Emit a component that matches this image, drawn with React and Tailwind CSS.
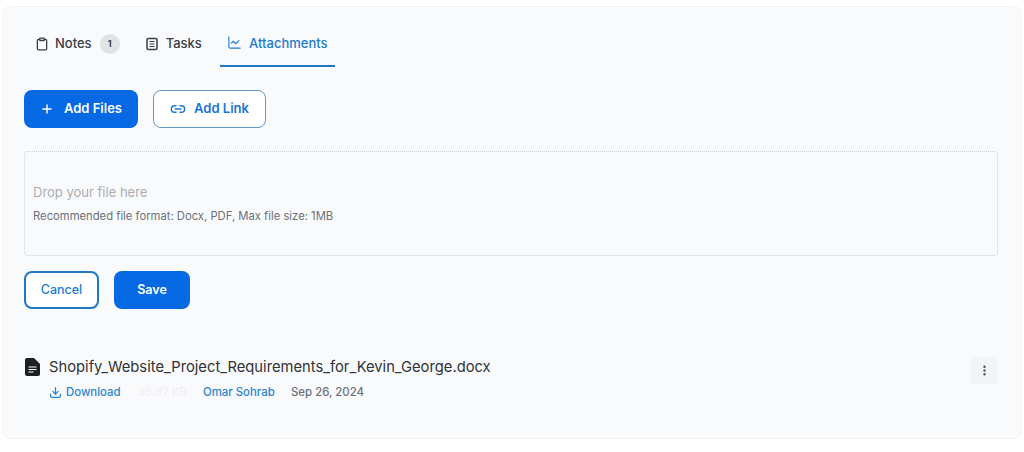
import { Plus, Link2, Download, EllipsisVertical, Clipboard, ChartLine } from 'lucide-react';

const App = () => {
  return (
    <div className="h-[452px] w-[1024px] overflow-hidden bg-white pt-[6px] pl-[2px] font-['Inter',sans-serif]">
      <div className="h-[433px] w-[1020px] rounded-lg border border-[#f2f4f6] bg-[#f9fafc] pl-[21px] pr-[23px]">
        {/* tabs */}
        <div className="flex h-[60px] items-end">
          <button className="flex h-[44px] items-center gap-[6px] pl-[11px] pr-[23px] pb-[2px] text-[13px] font-medium text-[#3a4048]">
            <Clipboard className="h-[14px] w-[14px]" strokeWidth={2.2} />
            <span>Notes</span>
            <span className="ml-[2px] flex h-[20px] w-[20px] items-center justify-center rounded-full bg-[#e1e2e4] text-[9px] font-bold">1</span>
          </button>
          <button className="flex h-[44px] items-center gap-[7px] pl-[2px] pr-[18px] pb-[2px] text-[13px] font-medium text-[#3a4048]">
            <svg viewBox="0 0 14 14" className="h-[14px] w-[14px]" fill="none" stroke="currentColor" strokeWidth="1.5">
              <rect x="2" y="1.5" width="10" height="11" rx="1.2" />
              <path d="M4.5 4.5h5M4.5 7h5M4.5 9.5h5" strokeWidth="1.2" />
            </svg>
            <span>Tasks</span>
          </button>
          <button className="flex h-[45px] w-[115px] items-center justify-center gap-[7px] border-b-2 border-[#1f78c4] text-[13px] font-medium text-[#1c7bd0]">
            <ChartLine className="h-[15px] w-[15px] -translate-y-[1px]" strokeWidth={1.8} />
            <span>Attachments</span>
          </button>
        </div>

        {/* add buttons */}
        <div className="mt-[23px] flex gap-[15px]">
          <button className="flex h-[38px] w-[114px] items-center justify-center gap-[10px] rounded-lg bg-[#0469e3] text-[13px] font-semibold text-white">
            <Plus className="h-[14px] w-[14px]" strokeWidth={2.5} />
            Add Files
          </button>
          <button className="flex h-[38px] w-[113px] items-center justify-center gap-[8px] rounded-lg border border-[#5f97c6] bg-white text-[13px] font-semibold text-[#1a76d6]">
            <Link2 className="h-[16px] w-[16px]" strokeWidth={2.2} />
            Add Link
          </button>
        </div>

        {/* drop zone */}
        <div className="mt-[23px] flex h-[105px] w-[974px] flex-col justify-center rounded-sm border border-dotted border-[#c9cdd3] px-[8px] pt-[1px]">
          <p className="text-[13px] text-[#a9adb3]">Drop your file here</p>
          <p className="mt-[6px] text-[11.25px] text-[#6b7078]">Recommended file format: Docx, PDF, Max file size: 1MB</p>
        </div>

        {/* form actions */}
        <div className="mt-[15px] flex gap-[15px]">
          <button className="h-[38px] w-[75px] rounded-lg border-2 border-[#1f78c4] bg-white text-[12.5px] font-medium text-[#1c7bd0]">Cancel</button>
          <button className="h-[38px] w-[76px] rounded-lg bg-[#0469e3] text-[12.5px] font-semibold text-white">Save</button>
        </div>

        {/* attachment row */}
        <div className="mt-[48px] flex w-[974px] items-start justify-between">
          <div>
            <div className="flex items-center gap-[9px] pl-[1px]">
              <svg viewBox="0 0 15 18" className="h-[18px] w-[15px]">
                <path fill="#1c1f24" d="M2 0h7l6 6v10a2 2 0 0 1-2 2H2a2 2 0 0 1-2-2V2a2 2 0 0 1 2-2z" />
                <path stroke="#fff" strokeWidth="1.2" d="M3.5 9h8M3.5 11.5h8M3.5 14h5" />
              </svg>
              <span className="text-[14.75px] leading-[20px] text-[#2f3339]">Shopify_Website_Project_Requirements_for_Kevin_George.docx</span>
            </div>
            <div className="mt-[7px] flex items-center pl-[25px] text-[11.4px] font-medium">
              <span className="flex w-[88px] items-center gap-[4px] text-[#2b83cd]">
                <Download className="h-[13px] w-[13px]" strokeWidth={2.2} />
                Download
              </span>
              <span className="w-[65px] pl-[1px] text-[#f0f1f3]">35.87 KB</span>
              <span className="w-[88px] pl-[1px] text-[#2b83cd]">Omar Sohrab</span>
              <span className="pl-[1px] text-[#6b7078]">Sep 26, 2024</span>
            </div>
          </div>
          <button className="flex h-[27px] w-[28px] items-center justify-center rounded bg-[#f2f4f6]">
            <EllipsisVertical className="h-[13px] w-[13px] text-[#4a4f57]" strokeWidth={2.5} />
          </button>
        </div>
      </div>
    </div>
  );
};

export default App;
